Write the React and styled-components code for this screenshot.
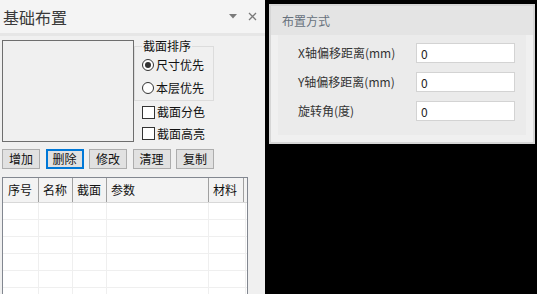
import React from 'react';
import styled, { createGlobalStyle } from 'styled-components';

const GlobalStyle = createGlobalStyle`
  html, body {
    margin: 0;
    padding: 0;
    overflow: hidden;
    background: #000;
  }
  * { box-sizing: border-box; }
`;

const Root = styled.div`
  display: flex;
  width: 537px;
  height: 294px;
  overflow: hidden;
  font-family: "Noto Sans CJK SC", "Microsoft YaHei", sans-serif;
  font-size: 12px;
  color: #111;
`;

const LeftPanel = styled.div`
  width: 265px;
  flex-shrink: 0;
  display: flex;
  flex-direction: column;
  background: #f0f0f0;
  overflow: hidden;
`;

const TitleBar = styled.div`
  height: 36px;
  flex-shrink: 0;
  display: flex;
  align-items: center;
  padding: 0 8px 0 3px;
  background: #f4f4f4;
  border-bottom: 3px solid #e6e6e6;
`;

const Title = styled.div`
  flex: 1;
  font-size: 16px;
  line-height: 18px;
  color: #3a3a3a;
`;

const TitleTools = styled.div`
  display: flex;
  align-items: center;
  gap: 11px;
`;

const Body = styled.div`
  flex-shrink: 0;
  padding: 4px 0 0 2px;
  display: flex;
  flex-direction: column;
`;

const TopSection = styled.div`
  display: flex;
  align-items: flex-start;
`;

const Preview = styled.div`
  width: 132px;
  height: 102px;
  flex-shrink: 0;
  border: 1px solid #6e6e6e;
  background: #f0f0f0;
`;

const SideColumn = styled.div`
  display: flex;
  flex-direction: column;
  margin-top: -1px;
`;

const GroupBox = styled.fieldset`
  width: 80px;
  margin: 0;
  padding: 0 0 0 7px;
  border: 1px solid #dcdcdc;
  height: 62px;
`;

const Legend = styled.legend`
  padding: 0 1px;
  font-size: 12px;
  line-height: 14px;
  color: #111;
`;

const OptionRow = styled.div`
  display: flex;
  align-items: center;
  height: ${({ h }) => h}px;
  padding-left: ${({ pl }) => pl || 0}px;
  gap: ${({ gap }) => gap}px;
  line-height: 14px;
`;

const Radio = styled.span`
  width: 12px;
  height: 12px;
  border-radius: 50%;
  border: 1px solid #333;
  background: #fff;
  display: flex;
  align-items: center;
  justify-content: center;
  &::after {
    content: '';
    width: 6px;
    height: 6px;
    border-radius: 50%;
    background: ${({ checked }) => (checked ? '#333' : 'transparent')};
  }
`;

const Checkbox = styled.span`
  width: 13px;
  height: 13px;
  border: 1px solid #333;
  background: #fff;
`;

const ButtonRow = styled.div`
  display: flex;
  gap: 5.5px;
  margin-top: 5px;
`;

const Button = styled.button`
  width: 38px;
  height: 20px;
  padding: 0;
  font-family: inherit;
  font-size: 12px;
  line-height: 14px;
  color: #111;
  background: #e1e1e1;
  border: ${({ active }) => (active ? '2px solid #0078d7' : '1px solid #adadad')};
  display: flex;
  align-items: center;
  justify-content: center;
`;

const Table = styled.div`
  margin-top: 8px;
  width: 246px;
  height: 130px;
  border: 1px solid #828790;
  border-bottom: none;
  background: #fff;
  display: flex;
  flex-direction: column;
`;

const HeaderRow = styled.div`
  display: flex;
  height: 25px;
  flex-shrink: 0;
  background: #f3f3f3;
  border-bottom: 1px solid #d8d8d8;
`;

const HeaderCell = styled.div`
  width: ${({ w }) => w}px;
  flex-shrink: 0;
  padding-left: ${({ pl }) => pl}px;
  border-right: 1px solid #a0a0a0;
  display: flex;
  align-items: center;
  line-height: 14px;
  color: #111;
`;

const DataRow = styled.div`
  display: flex;
  height: 17px;
  flex-shrink: 0;
  border-bottom: 1px solid #efefef;
`;

const DataCell = styled.div`
  width: ${({ w }) => w}px;
  flex-shrink: 0;
  border-right: 1px solid #efefef;
`;

const RightArea = styled.div`
  flex: 1;
  background: #000;
  padding: 4px 2px 0 4px;
`;

const Panel = styled.div`
  width: 266px;
  height: 140px;
  border: 2px solid #d6d6d6;
  background: #f0f0f0;
  display: flex;
  flex-direction: column;
`;

const PanelHeader = styled.div`
  height: 29px;
  flex-shrink: 0;
  background: #e4e4e4;
  display: flex;
  align-items: center;
  padding-left: 11px;
  color: #67717c;
  font-size: 12px;
`;

const PanelBody = styled.div`
  margin: 0 7px;
  padding: 8px 11px 14px 20px;
  background: #ebebeb;
  display: grid;
  grid-template-columns: 118px 99px;
  row-gap: 9px;
  align-items: center;
`;

const FieldLabel = styled.div`
  font-size: 12px;
  line-height: 14px;
  color: #333;
`;

const FieldInput = styled.div`
  height: 20px;
  background: #fff;
  border: 1px solid #d3d3d3;
  padding-left: 4px;
  display: flex;
  align-items: center;
  font-size: 12px;
  color: #222;
`;

const columns = [
  { label: '序号', w: 36, pl: 5 },
  { label: '名称', w: 34, pl: 4 },
  { label: '截面', w: 34, pl: 4 },
  { label: '参数', w: 102, pl: 4 },
  { label: '材料', w: 35, pl: 4 },
];

const bodyColumns = [36, 34, 34, 102, 37];

const fields = [
  { label: 'X轴偏移距离(mm)', value: '0' },
  { label: 'Y轴偏移距离(mm)', value: '0' },
  { label: '旋转角(度)', value: '0' },
];

const buttons = ['增加', '删除', '修改', '清理', '复制'];

const App = () => (
  <Root>
    <GlobalStyle />
    <LeftPanel>
      <TitleBar>
        <Title>基础布置</Title>
        <TitleTools>
          <svg width="8" height="5" viewBox="0 0 8 5">
            <path d="M0 0 L8 0 L4 4.5 Z" fill="#7a7a7a" />
          </svg>
          <svg width="9" height="9" viewBox="0 0 9 9">
            <path d="M1 1 L8 8 M8 1 L1 8" stroke="#7a7a7a" strokeWidth="1.3" />
          </svg>
        </TitleTools>
      </TitleBar>
      <Body>
        <TopSection>
          <Preview />
          <SideColumn>
            <GroupBox>
              <Legend>截面排序</Legend>
              <OptionRow h={23} gap={2}>
                <Radio checked />
                <span>尺寸优先</span>
              </OptionRow>
              <OptionRow h={23} gap={2}>
                <Radio />
                <span>本层优先</span>
              </OptionRow>
            </GroupBox>
            <OptionRow h={22} pl={8} gap={2}>
              <Checkbox />
              <span>截面分色</span>
            </OptionRow>
            <OptionRow h={21} pl={8} gap={2}>
              <Checkbox />
              <span>截面高亮</span>
            </OptionRow>
          </SideColumn>
        </TopSection>
        <ButtonRow>
          {buttons.map((b, i) => (
            <Button key={b} active={i === 1}>{b}</Button>
          ))}
        </ButtonRow>
        <Table>
          <HeaderRow>
            {columns.map((c) => (
              <HeaderCell key={c.label} w={c.w} pl={c.pl}>{c.label}</HeaderCell>
            ))}
          </HeaderRow>
          {Array.from({ length: 6 }).map((_, r) => (
            <DataRow key={r}>
              {bodyColumns.map((w, i) => (
                <DataCell key={i} w={w} />
              ))}
            </DataRow>
          ))}
        </Table>
      </Body>
    </LeftPanel>
    <RightArea>
      <Panel>
        <PanelHeader>布置方式</PanelHeader>
        <PanelBody>
          {fields.map((f) => (
            <React.Fragment key={f.label}>
              <FieldLabel>{f.label}</FieldLabel>
              <FieldInput>{f.value}</FieldInput>
            </React.Fragment>
          ))}
        </PanelBody>
      </Panel>
    </RightArea>
  </Root>
);

export default App;
